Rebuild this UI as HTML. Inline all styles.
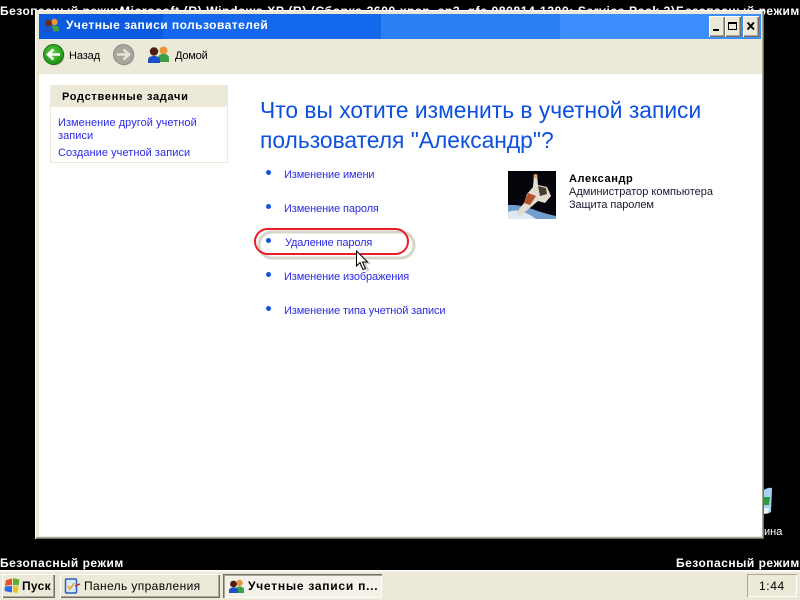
<!DOCTYPE html>
<html lang="ru">
<head>
<meta charset="utf-8">
<title>Учетные записи пользователей</title>
<style>
html,body{margin:0;padding:0;background:#000;}
body{width:800px;height:600px;position:relative;overflow:hidden;font-family:"Liberation Sans","DejaVu Sans",sans-serif;font-size:11px;}
.a{position:absolute;white-space:nowrap;line-height:13px;}
.w{color:#fff;font-weight:bold;font-size:12px;line-height:14px;}
.l{color:#2a2ae8;letter-spacing:.05px;}
.m{color:#2a2ae8;letter-spacing:-.12px;}
.d{position:absolute;width:5px;height:5px;border-radius:50%;background:#1553d8;}
.btn{position:absolute;background:#ece9d8;box-shadow:inset 1px 1px 0 #fff,inset -1px -1px 0 #716f64,inset -2px -2px 0 #aca899;}
</style>
</head>
<body>
<div class="a w" style="left:0;top:4px;letter-spacing:.5px;">Безопасный режим</div>
<div class="a w" style="left:120px;top:4px;letter-spacing:.64px;">Microsoft (R) Windows XP (R) (Сборка 2600.xpsp_sp3_gfe.080814-1300: Service Pack 3)</div>
<div class="a w" style="left:676px;top:4px;letter-spacing:.5px;">Безопасный режим</div>

<svg class="a" style="left:755px;top:486px;" width="20" height="30" viewBox="0 0 20 30"><path d="M9 4q4-3 8-2l-1 24q-3 2-7 2z" fill="#a9d3f5"/><path d="M9 11h6l-1 8H9z" fill="#2c9a38"/><path d="M9 22h5l-1 5H9z" fill="#e8f3fc"/></svg>
<div class="a" style="left:764px;top:526px;color:#fff;font-size:11px;">ина</div>

<!-- window -->
<div class="a" style="left:35px;top:10px;width:729px;height:529px;background:#ece9d8;box-shadow:inset 1px 1px 0 #fff,inset -1px -1px 0 #716f64,inset -2px -2px 0 #aca899;"></div>
<div class="a" style="left:39px;top:14px;width:722px;height:25px;background:linear-gradient(to right,#0a5be0 0 124px,#1468ec 124px 342px,#2a80f2 342px 521px,#3c8efc 521px);"></div>
<svg class="a" style="left:43px;top:17px;" width="17" height="17" viewBox="0 0 17 17"><circle cx="11.500" cy="5" r="3.200" fill="#e8963c"/><path d="M7 15v-3.500C7 9.500 9 8.500 11.500 8.500S16 9.500 16 11.500V14z" fill="#3aa048"/><circle cx="5.500" cy="6" r="3.400" fill="#6b2c14"/><path d="M1 15v-2.500C1 10.500 3 9.500 5.500 9.500S10 10.500 10 12.500V15z" fill="#1c4fc8"/></svg>
<div class="a" style="left:66px;top:18px;color:#fff;font-weight:bold;font-size:12px;line-height:15px;letter-spacing:.47px;">Учетные записи пользователей</div>
<div class="btn" style="left:709px;top:16px;width:16px;height:21px;"></div>
<div class="a" style="left:713px;top:29px;width:6px;height:2px;background:#000;"></div>
<div class="btn" style="left:725px;top:16px;width:16px;height:21px;"></div>
<div class="a" style="left:728px;top:22px;width:7px;height:5px;border:1px solid #000;border-top-width:2px;"></div>
<div class="btn" style="left:743px;top:16px;width:16px;height:21px;"></div>
<svg class="a" style="left:746px;top:21px;" width="10" height="10" viewBox="0 0 10 10"><path d="M1.500 1.500L8 8.500M8 1.500L1.500 8.500" stroke="#000" stroke-width="2" fill="none"/></svg>

<!-- toolbar -->
<svg class="a" style="left:42px;top:43px;" width="24" height="24" viewBox="0 0 24 24"><defs><radialGradient id="g" cx=".45" cy=".4" r=".65"><stop offset="0" stop-color="#5fce3c"/><stop offset="1" stop-color="#158a12"/></radialGradient></defs><circle cx="12.500" cy="12.500" r="10" fill="#b9b7a8"/><circle cx="11.500" cy="11.500" r="10" fill="url(#g)" stroke="#17700f"/><path d="M18 11.500H7M11.500 6.500L6 11.500l5.500 5" stroke="#fff" stroke-width="2.600" fill="none"/></svg>
<div class="a" style="left:69px;top:50px;color:#000;letter-spacing:-.1px;">Назад</div>
<svg class="a" style="left:112px;top:43px;" width="24" height="24" viewBox="0 0 24 24"><circle cx="12.500" cy="12.500" r="10" fill="#c9c7b8"/><circle cx="11.500" cy="11.500" r="10" fill="#a8a69c" stroke="#8d8b82"/><path d="M5 11.500H16M11.500 6.500L17 11.500l-5.500 5" stroke="#e6e4da" stroke-width="2.600" fill="none"/></svg>
<svg class="a" style="left:147px;top:45px;" width="24" height="19" viewBox="0 0 24 19"><circle cx="16.500" cy="5.500" r="4" fill="#e8963c"/><path d="M11 17v-4c0-3 2.500-4 5.500-4s5.500 1 5.500 4v4z" fill="#3aa048"/><circle cx="7" cy="6.500" r="4.200" fill="#4a1f10"/><path d="M1 18v-3c0-3 2.800-4 6-4s6 1 6 4v3z" fill="#1c4fc8"/></svg>
<div class="a" style="left:175px;top:50px;color:#000;letter-spacing:-.2px;">Домой</div>

<!-- content -->
<div class="a" style="left:39px;top:74px;width:723px;height:462px;background:#fff;"></div>

<!-- side panel -->
<div class="a" style="left:50px;top:85px;width:176px;height:77px;border:1px solid #ece9d8;border-top:0;background:#fff;"></div>
<div class="a" style="left:50px;top:85px;width:178px;height:22px;background:#ece9d8;"></div>
<div class="a" style="left:62px;top:91px;font-weight:bold;color:#000;letter-spacing:.7px;">Родственные задачи</div>
<div class="a l" style="left:58px;top:117px;">Изменение другой учетной</div>
<div class="a l" style="left:58px;top:130px;">записи</div>
<div class="a l" style="left:58px;top:147px;">Создание учетной записи</div>

<!-- heading -->
<div class="a" style="left:260px;top:97px;font-size:22.800px;line-height:27px;color:#0b50e0;">Что вы хотите изменить в учетной записи</div>
<div class="a" style="left:260px;top:127px;font-size:22.800px;line-height:27px;color:#0b50e0;">пользователя "Александр"?</div>

<!-- links -->
<div class="d" style="left:266px;top:170px;"></div>
<div class="a m" style="left:284px;top:169px;">Изменение имени</div>
<div class="d" style="left:266px;top:204px;"></div>
<div class="a m" style="left:284px;top:203px;">Изменение пароля</div>
<div class="d" style="left:266px;top:238px;"></div>
<div class="a m" style="left:285px;top:237px;">Удаление пароля</div>
<div class="d" style="left:266px;top:272px;"></div>
<div class="a m" style="left:284px;top:271px;">Изменение изображения</div>
<div class="d" style="left:266px;top:306px;"></div>
<div class="a m" style="left:284px;top:305px;">Изменение типа учетной записи</div>

<!-- ellipse and cursor -->
<svg class="a" style="left:250px;top:222px;" width="170" height="50" viewBox="0 0 170 50">
<rect x="9" y="10" width="155" height="26" rx="13" fill="none" stroke="#c9c6b8" stroke-width="3" opacity=".75"/>
<rect x="5" y="7" width="153" height="25" rx="12.500" fill="none" stroke="#ec1c24" stroke-width="2"/>
</svg>
<svg class="a" style="left:354px;top:249px;" width="18" height="24" viewBox="0 0 18 24">
<path d="M3.500 3l.500 15 3.500-3 3 7 3-1.500-3-6.500h5z" fill="#b9b7ae" transform="translate(2,1)" opacity=".6"/>
<path d="M2.500 2v15l3.500-3.500 3 7 2.500-1-3-6.500h5z" fill="#fff" stroke="#000" stroke-width="1"/>
</svg>

<!-- user -->
<svg class="a" style="left:508px;top:171px;" width="48" height="48" viewBox="0 0 48 48">
<rect width="48" height="48" fill="#04040a"/>
<path d="M0 34Q10 33 24 38T48 45V48H0z" fill="#6f9fcf"/>
<path d="M0 41Q12 36 28 48H0z" fill="#dfe9f4"/>
<path d="M26 4l3 0 1 10 9 2 4 9-6 7-7-2-7 6-11 9-4-3 8-10 3-9 6-7z" fill="#e2dcd0"/>
<path d="M20 22l8 3-6 9-6-2z" fill="#b4532a"/>
<path d="M30 15l8 2 1 6-7 2z" fill="#4a3c32"/>
<circle cx="27.500" cy="5" r="2" fill="#d8a070"/>
</svg>
<div class="a" style="left:569px;top:173px;font-weight:bold;color:#000;letter-spacing:.6px;">Александр</div>
<div class="a" style="left:569px;top:186px;color:#1a1a30;">Администратор компьютера</div>
<div class="a" style="left:569px;top:199px;color:#1a1a30;letter-spacing:-.1px;">Защита паролем</div>

<!-- bottom text -->
<div class="a w" style="left:0;top:556px;letter-spacing:.5px;">Безопасный режим</div>
<div class="a w" style="left:676px;top:556px;letter-spacing:.5px;">Безопасный режим</div>

<!-- taskbar -->
<div class="a" style="left:0;top:570px;width:800px;height:30px;background:#ece9d8;box-shadow:inset 0 1px 0 #fff,inset 0 2px 0 #f6f4ea;"></div>
<div class="btn" style="left:2px;top:574px;width:53px;height:24px;"></div>
<svg class="a" style="left:4px;top:577px;" width="17" height="17" viewBox="0 0 17 17"><path d="M2 3l6-1.500v6.500l-7 .800z" fill="#e8502a"/><path d="M9 1.200l6.500 1.300-1 6-5.500-.500z" fill="#5cae2c"/><path d="M1 9.500l7-.500v6.500l-7.500-1.500z" fill="#2b6ae0"/><path d="M9 9l5.500.500-1 6.500-4.500-.800z" fill="#f2c020"/></svg>
<div class="a" style="left:22px;top:579px;font-weight:bold;font-size:12px;line-height:14px;color:#000;letter-spacing:.3px;">Пуск</div>
<div class="btn" style="left:60px;top:574px;width:160px;height:24px;"></div>
<svg class="a" style="left:64px;top:577px;" width="17" height="18" viewBox="0 0 17 18"><rect x="1.500" y="2" width="11" height="14" rx="1" fill="#dbe8f8" stroke="#2a5ec0" stroke-width="1.500"/><path d="M4 9l2 3 4-6" stroke="#e8a020" stroke-width="1.500" fill="none"/><path d="M11 9l5-2" stroke="#c03a2a" stroke-width="1.500"/></svg>
<div class="a" style="left:84px;top:579px;font-size:12px;line-height:14px;color:#000;letter-spacing:.37px;">Панель управления</div>
<div class="a" style="left:223px;top:574px;width:159px;height:24px;background:#f3f1e8;box-shadow:inset 1px 1px 0 #716f64,inset 2px 2px 0 #aca899,inset -1px -1px 0 #fff;"></div>
<svg class="a" style="left:228px;top:578px;" width="17" height="17" viewBox="0 0 17 17"><circle cx="11.500" cy="5" r="3.200" fill="#e8963c"/><path d="M7 15v-3.500C7 9.500 9 8.500 11.500 8.500S16 9.500 16 11.500V15z" fill="#3aa048"/><circle cx="5.500" cy="6" r="3.400" fill="#4a1f10"/><path d="M1 15v-2.500C1 10.500 3 9.500 5.500 9.500S10 10.500 10 12.500V15z" fill="#1c4fc8"/></svg>
<div class="a" style="left:248px;top:579px;font-weight:bold;font-size:12px;line-height:14px;color:#000;letter-spacing:.75px;">Учетные записи п...</div>
<div class="a" style="left:747px;top:574px;width:50px;height:23px;box-shadow:inset 1px 1px 0 #aca899,inset -1px -1px 0 #fff;"></div>
<div class="a" style="left:759px;top:579px;font-size:12px;line-height:14px;color:#000;letter-spacing:.6px;">1:44</div>
</body>
</html>
